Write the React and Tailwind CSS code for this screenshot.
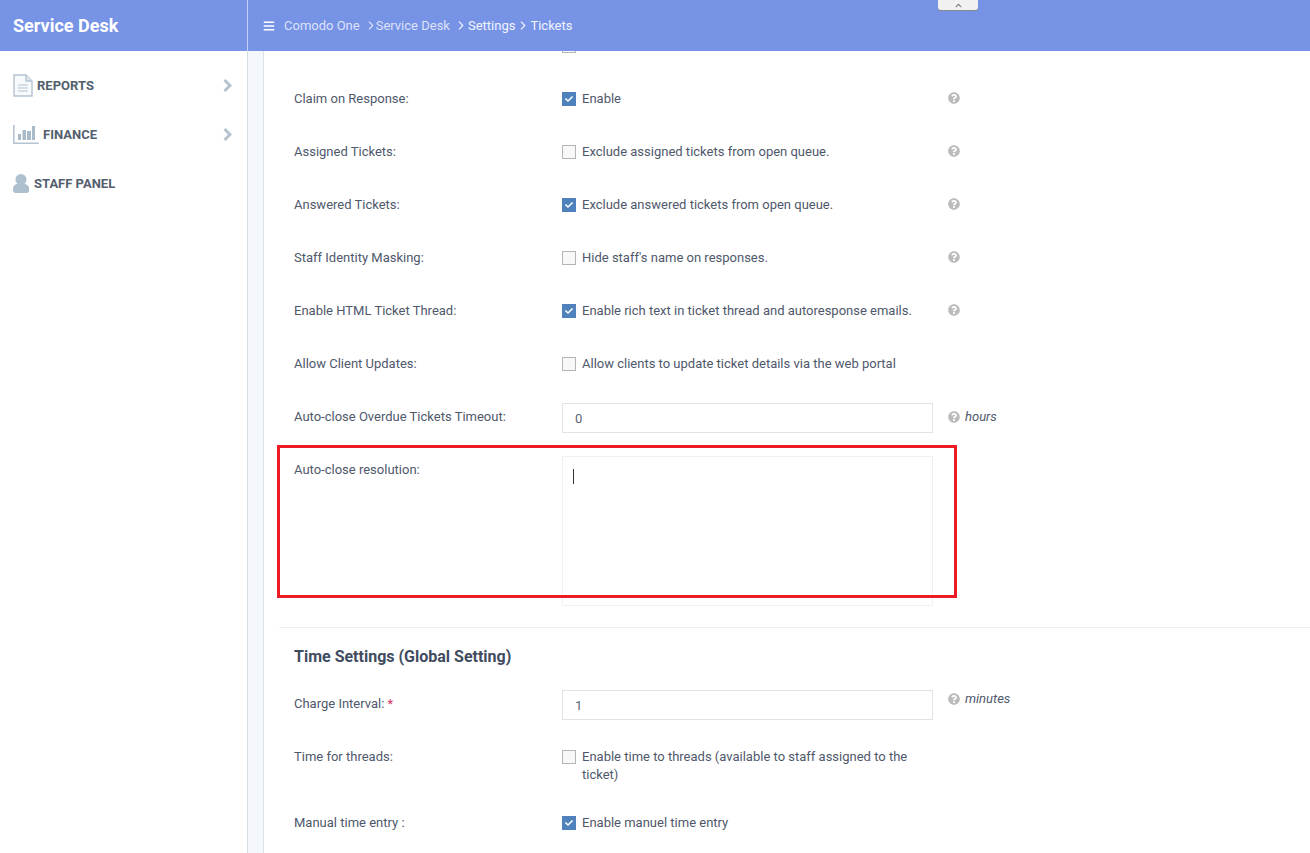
import { FaBars, FaChevronUp, FaCheck, FaQuestionCircle } from 'react-icons/fa';

const ReportIcon = () => (
  <svg width="20" height="23" viewBox="0 0 20 23" fill="none" stroke="#b4c4d2" strokeWidth="1.4">
    <path d="M1 1h12l6 6v15H1z" fill="#f7f9fb" />
    <path d="M13 1v6h6" fill="#dfe6ec" />
    <path d="M5 11h10M5 14h10M5 17h10" strokeWidth="1.2" />
  </svg>
);

const FinanceIcon = () => (
  <svg width="26" height="20" viewBox="0 0 26 20" fill="none">
    <path d="M.8 0v18.200h25" stroke="#b4c4d2" strokeWidth="1.600" />
    <path d="M5 9h3v6H5zM9.500 5H13v10H9.500zM14 6h4v9h-4zM19 1h3v14h-3z" fill="#a9bac8" />
  </svg>
);

const StaffIcon = () => (
  <svg width="16" height="19" viewBox="0 0 16 19" fill="#aebfce">
    <circle cx="8" cy="5.500" r="5.500" />
    <path d="M0 15c0-4 3-5.500 8-5.500s8 1.500 8 5.500v1.500c0 1.500-1 2.500-2.500 2.500h-11C1 19 0 18 0 16.500z" />
  </svg>
);

const NavArrow = () => (
  <svg width="9" height="13" viewBox="0 0 9 13" fill="none" stroke="#b4c2cd" strokeWidth="3">
    <path d="M1.500 1l5.500 5.500L1.500 12" />
  </svg>
);

const Crumb = () => (
  <svg width="6" height="9" viewBox="0 0 6 9" fill="none" stroke="currentColor" strokeWidth="1.2">
    <path d="M1 .7l3.800 3.800L1 8.300" />
  </svg>
);

const Check = ({ checked }) =>
  checked ? (
    <span className="flex w-[14px] h-[14px] shrink-0 items-center justify-center bg-[#4f81bd] text-white">
      <FaCheck size={8} />
    </span>
  ) : (
    <span className="block w-[14px] h-[14px] shrink-0 border border-[#b5b5b5] bg-[#f8f8f8]" />
  );

const Help = ({ note }) => (
  <div className="flex items-center gap-[5px] ml-[15px] text-[#bbbbbb]">
    <FaQuestionCircle size={12} />
    {note && <span className="text-[13px] italic leading-[18px] text-[#4f586b]">{note}</span>}
  </div>
);

const CheckRow = ({ label, text, checked, help }) => (
  <div className="flex min-h-[53px] pt-[18px] pb-[12px] pl-[15px]">
    <div className="w-[268px] shrink-0">{label}</div>
    <div className="flex w-[371px] shrink-0 items-start gap-[6px]">
      <span className="mt-[2px]"><Check checked={checked} /></span>
      <span className="max-w-[340px]">{text}</span>
    </div>
    {help && <div className="mt-[2px]"><Help /></div>}
  </div>
);

const InputRow = ({ label, value, note, required }) => (
  <div className="flex h-[53px] pt-[13px] pl-[15px]">
    <div className="w-[268px] shrink-0 pt-[5px]">
      {label}
      {required && <span className="text-[#d9345f]"> *</span>}
    </div>
    <div className="flex w-[371px] h-[30px] shrink-0 items-center border border-[#dfe4e9] bg-white pl-[12px] pt-[2px] text-[#5a6478]">
      {value}
    </div>
    <div className={note === 'hours' ? 'mt-[5px]' : 'mt-0'}><Help note={note} /></div>
  </div>
);

const rowsTop = [
  { label: '', text: '', checked: false },
  { label: 'Claim on Response:', text: 'Enable', checked: true, help: true },
  { label: 'Assigned Tickets:', text: 'Exclude assigned tickets from open queue.', checked: false, help: true },
  { label: 'Answered Tickets:', text: 'Exclude answered tickets from open queue.', checked: true, help: true },
  { label: 'Staff Identity Masking:', text: "Hide staff's name on responses.", checked: false, help: true },
  { label: 'Enable HTML Ticket Thread:', text: 'Enable rich text in ticket thread and autoresponse emails.', checked: true, help: true },
  { label: 'Allow Client Updates:', text: 'Allow clients to update ticket details via the web portal', checked: false },
];

const navItems = [
  { name: 'REPORTS', icon: <ReportIcon />, gap: 'gap-[4px]', arrow: true },
  { name: 'FINANCE', icon: <FinanceIcon />, gap: 'gap-[4px]', arrow: true },
  { name: 'STAFF PANEL', icon: <StaffIcon />, gap: 'gap-[5px]' },
];

export default function App() {
  return (
    <div className="relative flex h-[853px] flex-col overflow-hidden bg-white font-['Roboto',sans-serif] text-[13px] leading-[18px] text-[#4f586b]">
      <header className="z-10 flex h-[51px] shrink-0 bg-[#7793e6] text-white">
        <div className="flex w-[248px] shrink-0 items-center border-r border-[#c3cff3] pl-[13px] text-[18px] font-bold">
          Service Desk
        </div>
        <div className="flex items-center pl-[15px] text-[13px] font-normal">
          <FaBars size={12} />
          <span className="ml-[9px] text-white/75">Comodo One</span>
          <span className="ml-[8px] text-white/75"><Crumb /></span>
          <span className="ml-[2px] text-white/75">Service Desk</span>
          <span className="ml-[8px] text-white/90"><Crumb /></span>
          <span className="ml-[4px] text-white/90">Settings</span>
          <span className="ml-[5px] text-white/90"><Crumb /></span>
          <span className="ml-[4px] text-white/90">Tickets</span>
        </div>
      </header>

      <div className="flex min-h-0 flex-1">
        <aside className="w-[248px] shrink-0 border-r border-[#d6dce3] bg-white pt-[10px]">
          {navItems.map((item) => (
            <div key={item.name} className="flex h-[49px] items-center justify-between pl-[13px] pr-[15px]">
              <div className={`flex items-center ${item.gap} text-[13px] font-bold text-[#535e6e]`}>
                {item.icon}
                <span>{item.name}</span>
              </div>
              {item.arrow && <NavArrow />}
            </div>
          ))}
        </aside>

        <div className="w-[16px] shrink-0 border-r border-[#dde2e7] bg-[#f4f8fc]" />

        <main className="min-w-0 flex-1 overflow-hidden pl-[15px]">
          <div className="mt-[-32px]">
            {rowsTop.map((row, i) => (
              <CheckRow key={i} {...row} />
            ))}
            <InputRow label="Auto-close Overdue Tickets Timeout:" value="0" note="hours" />

            <div className="flex pt-[13px] pb-[21px] pl-[15px]">
              <div className="w-[268px] shrink-0 pt-[5px]">Auto-close resolution:</div>
              <div className="h-[150px] w-[371px] shrink-0 border border-[#eef0f2] pl-[10px] pt-[12px]">
                <div className="h-[15px] w-px bg-[#333333]" />
              </div>
            </div>

            <div className="border-t border-[#eceef0] pl-[15px] pt-[19px] pb-[10px]">
              <h2 className="h-[20px] text-[16px] font-bold leading-[20px] text-[#414c60]">Time Settings (Global Setting)</h2>
            </div>

            <InputRow label="Charge Interval:" value="1" note="minutes" required />
            <CheckRow label="Time for threads:" text="Enable time to threads (available to staff assigned to the ticket)" checked={false} />
            <CheckRow label="Manual time entry :" text="Enable manuel time entry" checked />
          </div>
        </main>
      </div>

      <div className="absolute left-[938px] top-0 z-20 flex h-[10px] w-[40px] items-center justify-center rounded-b-[3px] bg-[#f1f1f1] shadow-[0_1px_1px_#8a8a8a] text-[#777777]">
        <FaChevronUp size={7} />
      </div>
      <div className="pointer-events-none absolute left-[277px] top-[445px] z-20 h-[153px] w-[680px] border-[3px] border-[#ed1c24]" />
    </div>
  );
}
